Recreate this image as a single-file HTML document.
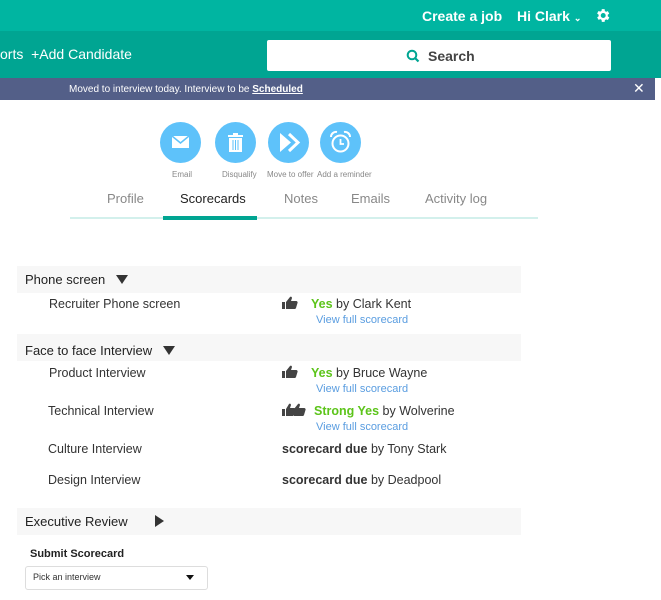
<!DOCTYPE html>
<html><head><style>
*{margin:0;padding:0;box-sizing:border-box}
body{width:661px;height:600px;overflow:hidden;background:#fff;font-family:"Liberation Sans",Arial,sans-serif;position:relative;color:#333}
.a{position:absolute;white-space:nowrap}
.top{left:0;top:0;width:661px;height:31px;background:#00b5a1}
.nav{left:0;top:31px;width:661px;height:47px;background:#00a592}
.ban{left:0;top:78px;width:655px;height:22px;background:#535f88}
.circ{position:absolute;top:122px;width:41px;height:41px;border-radius:50%;background:#5ec2fa}
.lbl{font-size:8px;color:#888;top:170px}
.tab{font-size:13px;color:#888;top:191px}
.hdr{left:17px;width:504px;height:27px;background:#f7f7f7}
.ht{font-size:13px;color:#222}
.it{font-size:12.5px;color:#333}
.g{color:#5cc41a;font-weight:bold}
.v{font-size:11px;color:#5a9de0}
.tri{display:inline-block;width:0;height:0;border-left:6px solid transparent;border-right:6px solid transparent;border-top:9px solid #333}
.th{vertical-align:-2px}
</style></head><body>
<div class="a top"></div>
<div class="a" style="left:422px;top:8px;font-size:14px;font-weight:bold;color:#fff">Create a job</div>
<div class="a" style="left:517px;top:8px;font-size:14px;font-weight:bold;color:#fff">Hi Clark <span style="font-size:9px">⌄</span></div>
<svg class="a" style="left:594px;top:7px" width="17" height="17" viewBox="0 0 24 24"><path fill="#fff" d="M19.4 13a7.5 7.5 0 000-2l2.1-1.6-2-3.5-2.5 1a7 7 0 00-1.7-1L15 3h-4l-.4 2.6a7 7 0 00-1.7 1l-2.5-1-2 3.5L6.6 11a7.5 7.5 0 000 2l-2.1 1.6 2 3.5 2.5-1a7 7 0 001.7 1L11 21h4l.4-2.6a7 7 0 001.7-1l2.5 1 2-3.5zM13 15.5a3.5 3.5 0 110-7 3.5 3.5 0 010 7z"/></svg>
<div class="a nav"></div>
<div class="a" style="left:0;top:46px;font-size:14px;color:#fff">orts&nbsp;&nbsp;+Add Candidate</div>
<div class="a" style="left:267px;top:40px;width:344px;height:31px;background:#fff;border-radius:2px"></div>
<svg class="a" style="left:406px;top:49px" width="14" height="14" viewBox="0 0 14 14"><circle cx="6" cy="6" r="4.3" fill="none" stroke="#00a592" stroke-width="2"/><path d="M9 9l3.5 3.5" stroke="#00a592" stroke-width="2.2"/></svg>
<div class="a" style="left:428px;top:48px;font-size:14px;font-weight:bold;color:#444">Search</div>
<div class="a ban"></div>
<div class="a" style="left:69px;top:84px;font-size:10px;color:#fff">Moved to interview today. Interview to be <b style="text-decoration:underline">Scheduled</b></div>
<div class="a" style="left:633px;top:80px;font-size:14px;color:#fff">✕</div>

<div class="circ" style="left:160px"><svg width="41" height="41"><rect x="12" y="14" width="17" height="12" fill="#fff"/><path d="M12 14l8.5 7 8.5-7" stroke="#5ec2fa" stroke-width="1.5" fill="none"/></svg></div>
<div class="circ" style="left:215px"><svg width="41" height="41"><rect x="13" y="13" width="15" height="2" fill="#fff"/><rect x="18" y="11" width="5" height="2" fill="#fff"/><rect x="14" y="16" width="13" height="14" fill="#fff"/><path d="M18 18v10M20.5 18v10M23 18v10" stroke="#5ec2fa"/></svg></div>
<div class="circ" style="left:268px"><svg width="41" height="41"><path d="M12 11v19l11-9.5z" fill="#fff"/><path d="M21 12l9 8.5-9 8.5" stroke="#fff" stroke-width="3" fill="none"/></svg></div>
<div class="circ" style="left:320px"><svg width="41" height="41"><circle cx="20.5" cy="21.5" r="8" stroke="#fff" stroke-width="2" fill="none"/><path d="M20.5 17v5h3.5" stroke="#fff" stroke-width="1.8" fill="none"/><path d="M11 15a5 5 0 016-5M30 15a5 5 0 00-6-5" stroke="#fff" stroke-width="2" fill="none"/></svg></div>
<div class="a lbl" style="left:172px">Email</div>
<div class="a lbl" style="left:222px">Disqualify</div>
<div class="a lbl" style="left:267px">Move to offer</div>
<div class="a lbl" style="left:317px">Add a reminder</div>
<div class="a tab" style="left:107px">Profile</div>
<div class="a tab" style="left:180px;color:#222">Scorecards</div>
<div class="a tab" style="left:284px">Notes</div>
<div class="a tab" style="left:351px">Emails</div>
<div class="a tab" style="left:425px">Activity log</div>
<div class="a" style="left:70px;top:217px;width:468px;height:2px;background:#d3f0ec"></div>
<div class="a" style="left:163px;top:216px;width:94px;height:4px;background:#00a592"></div>

<div class="a hdr" style="top:266px"></div>
<div class="a ht" style="left:25px;top:272px">Phone screen&nbsp;&nbsp;&nbsp;<span class="tri"></span></div>
<div class="a it" style="left:49px;top:297px">Recruiter Phone screen</div>
<svg class="a" style="left:282px;top:296px" width="16" height="14" viewBox="0 0 16 14"><rect x="0" y="6" width="3" height="7" fill="#444"/><path d="M4 6l4-5c1-1 2 0 2 1l-1 3h5c1 0 2 1 1.5 2l-1.5 5c-.3.7-.8 1-1.5 1H4z" fill="#444"/></svg>
<div class="a it" style="left:311px;top:297px"><span class="g">Yes</span> by Clark Kent</div>
<div class="a v" style="left:316px;top:314px">View full scorecard</div>

<div class="a hdr" style="top:334px"></div>
<div class="a ht" style="left:25px;top:343px">Face to face Interview&nbsp;&nbsp;&nbsp;<span class="tri"></span></div>
<div class="a it" style="left:49px;top:366px">Product Interview</div>
<svg class="a" style="left:282px;top:365px" width="16" height="14" viewBox="0 0 16 14"><rect x="0" y="6" width="3" height="7" fill="#444"/><path d="M4 6l4-5c1-1 2 0 2 1l-1 3h5c1 0 2 1 1.5 2l-1.5 5c-.3.7-.8 1-1.5 1H4z" fill="#444"/></svg>
<div class="a it" style="left:311px;top:366px"><span class="g">Yes</span> by Bruce Wayne</div>
<div class="a v" style="left:316px;top:383px">View full scorecard</div>
<div class="a it" style="left:48px;top:404px">Technical Interview</div>
<svg class="a" style="left:282px;top:403px" width="24" height="14" viewBox="0 0 24 14"><rect x="0" y="6" width="3" height="7" fill="#444"/><path d="M4 6l3-5c1-1 2 0 2 1l-1 3h4c1 0 1.5 1 1.3 2l-1.3 5c-.3.7-.8 1-1.5 1H4z" fill="#444"/><path d="M12 6l4-5c1-1 2 0 2 1l-1 3h5c1 0 2 1 1.5 2l-1.5 5c-.3.7-.8 1-1.5 1H12z" fill="#444"/></svg>
<div class="a it" style="left:314px;top:404px"><span class="g">Strong Yes</span> by Wolverine</div>
<div class="a v" style="left:316px;top:421px">View full scorecard</div>
<div class="a it" style="left:48px;top:442px">Culture Interview</div>
<div class="a it" style="left:282px;top:442px"><b>scorecard due</b> by Tony Stark</div>
<div class="a it" style="left:48px;top:473px">Design Interview</div>
<div class="a it" style="left:282px;top:473px"><b>scorecard due</b> by Deadpool</div>

<div class="a hdr" style="top:508px"></div>
<div class="a ht" style="left:25px;top:514px">Executive Review</div>
<div class="a" style="left:155px;top:515px;width:0;height:0;border-top:6px solid transparent;border-bottom:6px solid transparent;border-left:9px solid #333"></div>
<div class="a" style="left:30px;top:548px;font-size:11px;font-weight:bold;color:#222">Submit Scorecard</div>
<div class="a" style="left:25px;top:566px;width:183px;height:24px;border:1px solid #ddd;border-radius:3px"></div>
<div class="a" style="left:33px;top:572px;font-size:9px;color:#333">Pick an interview</div>
<div class="a" style="left:186px;top:575px;width:0;height:0;border-left:4px solid transparent;border-right:4px solid transparent;border-top:5px solid #111"></div>
</body></html>
